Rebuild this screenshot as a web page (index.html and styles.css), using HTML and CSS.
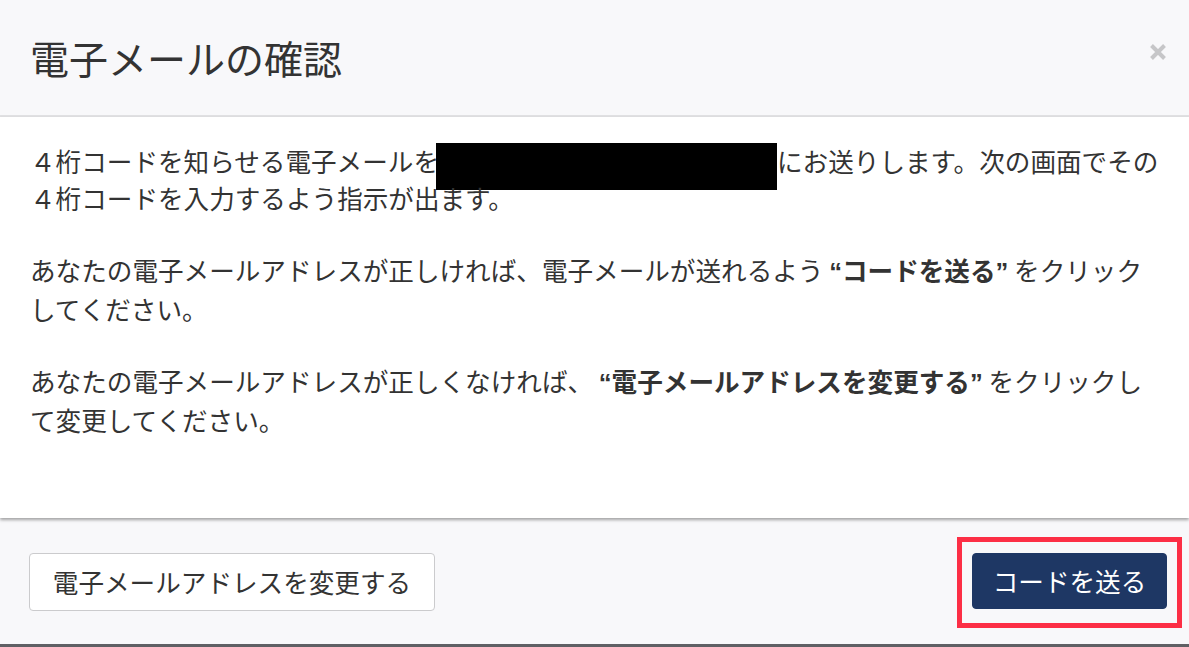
FILE: index.html
```html
<!DOCTYPE html>
<html lang="ja">
<head>
<meta charset="utf-8">
<title>電子メールの確認</title>
<link rel="stylesheet" href="styles.css">
</head>
<body>
<div class="modal">
  <header class="modal-header">
    <h1 class="modal-title">電子メールの確認</h1>
    <button class="close" type="button" aria-label="閉じる">
      <svg width="18" height="18" viewBox="0 0 18 18"><path d="M2.5 2.5 L15.5 15.5 M15.5 2.5 L2.5 15.5" stroke="#c6c6c8" stroke-width="4" stroke-linecap="butt" fill="none"/></svg>
    </button>
  </header>
  <div class="modal-body">
    <p>４桁コードを知らせる電子メールを<span class="redact"></span>にお送りします。次の画面でその４桁コードを入力するよう指示が出ます。</p>
    <p>あなたの電子メールアドレスが正しければ、電子メールが送れるよう <strong>“コードを送る”</strong> をクリックしてください。</p>
    <p>あなたの電子メールアドレスが正しくなければ、 <strong>“電子メールアドレスを変更する”</strong> をクリックして変更してください。</p>
  </div>
  <footer class="modal-footer">
    <button class="btn btn-default" type="button">電子メールアドレスを変更する</button>
    <span class="highlight"><button class="btn btn-primary" type="button">コードを送る</button></span>
  </footer>
</div>
<div class="page-behind"></div>
</body>
</html>
```

FILE: styles.css
```css
html, body {
  margin: 0;
  padding: 0;
}
body {
  width: 1189px;
  height: 647px;
  overflow: hidden;
  display: flex;
  flex-direction: column;
  background: #6b6b6e;
  font-family: "Noto Sans CJK JP", "Noto Sans", sans-serif;
  color: #333;
}
.modal {
  display: flex;
  flex-direction: column;
  height: 644px;
  flex: none;
  background: #f8f8fa;
}
.modal-header {
  height: 117px;
  flex: none;
  box-sizing: border-box;
  padding: 0 22px 0 30px;
  display: flex;
  align-items: center;
  justify-content: space-between;
  border-bottom: 2px solid #e1e1e3;
  background: #f8f8fa;
}
.modal-title {
  margin: 0;
  font-size: 39px;
  font-weight: 400;
  line-height: 57px;
  color: #333;
}
.close {
  border: 0;
  background: transparent;
  padding: 0;
  width: 18px;
  height: 18px;
  margin-bottom: 12px;
  display: flex;
}
.modal-body {
  height: 401px;
  flex: none;
  box-sizing: border-box;
  background: #fff;
  padding: 26px 24px 0 30px;
  font-size: 25.6px;
  line-height: 36.6px;
  box-shadow: 0 2px 3px rgba(0, 0, 0, 0.35);
  position: relative;
  z-index: 1;
}
.modal-body p {
  margin: 0 0 36px;
}
.modal-body strong {
  font-weight: 700;
  font-family: "Liberation Sans", "Noto Sans CJK JP", sans-serif;
}
.redact {
  display: inline-block;
  vertical-align: top;
  width: 341px;
  height: 47px;
  margin: 0 0 -11px -3px;
  background: #000;
}
.modal-footer {
  flex: 1;
  display: flex;
  justify-content: space-between;
  align-items: flex-start;
  padding: 35px 22px 0 29px;
  background: #f8f8fa;
}
.btn {
  font-family: "Noto Sans CJK JP", "Noto Sans", sans-serif;
  font-size: 25.6px;
  line-height: 38px;
  border-radius: 4px;
  cursor: pointer;
  box-sizing: border-box;
  white-space: nowrap;
}
.btn-default {
  width: 406px;
  height: 58px;
  background: #fff;
  color: #333;
  border: 1.5px solid #cbcbcd;
  padding: 0;
}
.btn-primary {
  width: 195px;
  height: 56px;
  background: #1e3764;
  color: #fff;
  border: 1px solid #1e3764;
  padding: 0;
}
.highlight {
  position: relative;
  display: flex;
}
.highlight::after {
  content: "";
  position: absolute;
  left: -15px;
  right: -15px;
  top: -16px;
  bottom: -19px;
  border: 5px solid #fc2e45;
  pointer-events: none;
}
.page-behind {
  flex: 1;
  background: #5f6064;
}
```
